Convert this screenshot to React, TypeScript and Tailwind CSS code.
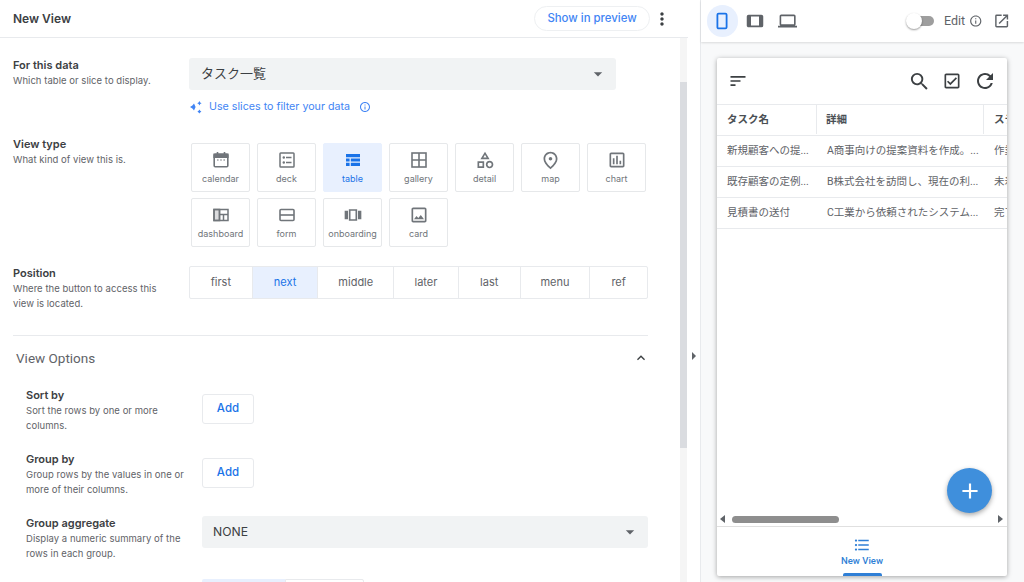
import {
  MdAdd,
  MdArrowDropDown,
  MdExpandLess,
  MdFormatListBulleted,
  MdInfoOutline,
  MdLaptop,
  MdMoreVert,
  MdOutlineCategory,
  MdOutlineCheckBox,
  MdOutlineImage,
  MdOutlineInsertChart,
  MdOutlineOpenInNew,
  MdOutlinePlace,
  MdOutlineViewCarousel,
  MdRefresh,
  MdSearch,
  MdSort,
} from "react-icons/md";

function Calendar() {
  return (
    <svg viewBox="0 0 18 18" className="h-[18px] w-[18px]" fill="none" stroke="currentColor" strokeWidth="1.6">
      <rect x="2.2" y="3.2" width="13.6" height="12.6" rx="1" />
      <path d="M2.2 3.2h13.6v3H2.2z" fill="currentColor" />
      <path d="M5.5 1v3M12.5 1v3" />
      <path d="M5 9h1.6M8.2 9h1.6M11.4 9h1.6" strokeWidth="1.2" />
    </svg>
  );
}

function Deck() {
  return (
    <svg viewBox="0 0 18 18" className="h-[18px] w-[18px]" fill="none" stroke="currentColor" strokeWidth="1.5">
      <rect x="2" y="2" width="14" height="14" rx="0.8" />
      <circle cx="5.8" cy="6.5" r="1.2" fill="currentColor" stroke="none" />
      <circle cx="5.8" cy="11.5" r="1.2" fill="currentColor" stroke="none" />
      <path d="M8 6.5h5.5M8 11.5h5.5" />
    </svg>
  );
}

function TableIcon() {
  return (
    <svg viewBox="0 0 18 18" className="h-[18px] w-[18px]" fill="currentColor">
      <path d="M2 3h14v3.2H2zM2 7.4h3.6v3.2H2zM6.8 7.4H16v3.2H6.8zM2 11.8h3.6V15H2zM6.8 11.8H16V15H6.8z" />
    </svg>
  );
}

function Gallery() {
  return (
    <svg viewBox="0 0 18 18" className="h-[18px] w-[18px]" fill="none" stroke="currentColor" strokeWidth="1.6">
      <rect x="2" y="2" width="14" height="14" />
      <path d="M9 2v14M2 9h14" />
    </svg>
  );
}

function Dashboard() {
  return (
    <svg viewBox="0 0 18 18" className="h-[18px] w-[18px]" fill="none" stroke="currentColor" strokeWidth="1.5">
      <rect x="2" y="3.5" width="14" height="11" />
      <path d="M7.5 3.5v11M7.5 8.5H16M11.5 8.5v6" />
      <path d="M2 3.5h5.5v11H2z" fill="currentColor" fillOpacity="0.25" />
    </svg>
  );
}

function FormIcon() {
  return (
    <svg viewBox="0 0 18 18" className="h-[18px] w-[18px]" fill="none" stroke="currentColor" strokeWidth="1.6">
      <rect x="2" y="3.5" width="14" height="11" rx="1" />
      <path d="M2 9h14" />
    </svg>
  );
}

function Sparkle() {
  return (
    <svg viewBox="0 0 14 14" className="h-[14px] w-[14px]" fill="#4285f4">
      <path d="M5 3.6 6.6 7 5 10.4 3.4 8.6 1 7l2.4-1.6z" />
      <path d="M10.4 1l.8 1.4 1.4.8-1.4.8-.8 1.4-.8-1.4L8.2 3.2l1.4-.8z" />
      <path d="M10.4 9.6l.8 1.2 1.2.8-1.2.8-.8 1.2-.8-1.2-1.2-.8 1.2-.8z" />
    </svg>
  );
}

function Phone() {
  return (
    <svg viewBox="0 0 18 18" className="h-[18px] w-[18px]" fill="none" stroke="#1a73e8" strokeWidth="1.8">
      <rect x="4.4" y="1.6" width="9.2" height="14.8" rx="1.2" />
    </svg>
  );
}

function Tablet() {
  return (
    <svg viewBox="0 0 18 18" className="h-[18px] w-[18px]" fill="none" stroke="#5f6368" strokeWidth="1.7">
      <rect x="1.6" y="3.6" width="14.8" height="10.8" rx="1" />
      <path d="M2 4h3v10H2zM13 4h3v10h-3z" fill="#5f6368" stroke="none" />
    </svg>
  );
}

const viewTypes = [
  { name: "calendar", icon: <Calendar /> },
  { name: "deck", icon: <Deck /> },
  { name: "table", icon: <TableIcon />, active: true },
  { name: "gallery", icon: <Gallery /> },
  { name: "detail", icon: <MdOutlineCategory size={20} /> },
  { name: "map", icon: <MdOutlinePlace size={21} /> },
  { name: "chart", icon: <MdOutlineInsertChart size={20} /> },
  { name: "dashboard", icon: <Dashboard /> },
  { name: "form", icon: <FormIcon /> },
  { name: "onboarding", icon: <MdOutlineViewCarousel size={20} /> },
  { name: "card", icon: <MdOutlineImage size={20} /> },
];

const positions = [
  { name: "first", w: "w-[63px]" },
  { name: "next", w: "w-[66px]", active: true },
  { name: "middle", w: "w-[76px]" },
  { name: "later", w: "w-[65px]" },
  { name: "last", w: "w-[62px]" },
  { name: "menu", w: "w-[70px]" },
  { name: "ref", w: "w-[57px]" },
];

const rows = [
  ["新規顧客への提...", "A商事向けの提案資料を作成。...", "作業中"],
  ["既存顧客の定例...", "B株式会社を訪問し、現在の利...", "未着手"],
  ["見積書の送付", "C工業から依頼されたシステム...", "完了"],
];

function Label({ title, desc, className }: { title: string; desc: string[]; className: string }) {
  return (
    <div className={className}>
      <div className="text-[11px] leading-[14px] font-semibold text-[#3c4043]">{title}</div>
      <div className="mt-[1px] text-[9.5px] leading-[15px] tracking-[0.04px] text-[#5f6368]">
        {desc.map((line) => (
          <div key={line}>{line}</div>
        ))}
      </div>
    </div>
  );
}

function Select({ value, className }: { value: string; className: string }) {
  return (
    <div className={`flex h-[32px] items-center justify-between rounded-[3px] bg-[#f1f3f4] pr-[8px] text-[#3c4043] ${className}`}>
      <span>{value}</span>
      <MdArrowDropDown size={20} className="text-[#5f6368]" />
    </div>
  );
}

function AddButton() {
  return (
    <div className="ml-[13px] mt-[6px] flex h-[30px] w-[52px] items-center justify-center rounded-[3px] border border-[#e8eaed] text-[11.5px] font-medium text-[#1a73e8]">
      Add
    </div>
  );
}

export default function App() {
  return (
    <div className="flex h-[582px] w-[1024px] overflow-hidden bg-white [font-family:Inter,'Noto_Sans_CJK_JP',sans-serif]">
      {/* Editor */}
      <div className="flex w-[688px] shrink-0 flex-col">
        <div className="flex h-[38px] shrink-0 items-center justify-between border-b border-[#e8eaed] pl-[13px] pr-[20px]">
          <div className="text-[12px] font-semibold text-[#3c4043]">New View</div>
          <div className="flex items-center gap-[2px]">
            <div className="flex h-[25px] w-[116px] items-center justify-center rounded-full border border-[#eef0f2] text-[11.4px] font-medium text-[#4285f4]">
              Show in preview
            </div>
            <MdMoreVert size={20} className="mr-[-4px] text-[#3c4043]" />
          </div>
        </div>

        <div className="flex min-h-0 flex-1">
          <div className="w-[680px] shrink-0 overflow-hidden pl-[13px] pr-[32px] pt-[20px]">
            {/* For this data */}
            <div className="flex">
              <Label className="w-[176px] shrink-0" title="For this data" desc={["Which table or slice to display."]} />
              <div className="flex-1">
                <Select value="タスク一覧" className="w-[427px] pl-[12px] text-[13px]" />
                <div className="mt-[9px] flex h-[16px] items-center text-[10.7px] text-[#4285f4]">
                  <Sparkle />
                  <span className="ml-[6px]">Use slices to filter your data</span>
                  <MdInfoOutline size={12} className="ml-[9px]" />
                </div>
              </div>
            </div>

            {/* View type */}
            <div className="mt-[22px] flex">
              <Label className="w-[176px] shrink-0" title="View type" desc={["What kind of view this is."]} />
              <div className="ml-[2px] mt-[6px] grid grid-cols-[repeat(7,59px)] gap-x-[7px] gap-y-[6px]">
                {viewTypes.map((v) => (
                  <div
                    key={v.name}
                    className={`flex h-[49px] flex-col items-center justify-center rounded-[2px] border ${
                      v.active ? "border-[#e8f0fe] bg-[#e8f0fe] text-[#1a73e8]" : "border-[#e6e8ea] text-[#70757a]"
                    }`}
                  >
                    <div className="flex h-[20px] items-center">{v.icon}</div>
                    <div className="mt-[3px] text-[9px] leading-[12px]">{v.name}</div>
                  </div>
                ))}
              </div>
            </div>

            {/* Position */}
            <div className="mt-[19px] flex">
              <Label className="w-[176px] shrink-0" title="Position" desc={["Where the button to access this", "view is located."]} />
              <div className="flex h-[33px] overflow-hidden rounded-[2px] border border-[#e8eaed]">
                {positions.map((p) => (
                  <div
                    key={p.name}
                    className={`flex items-center justify-center border-r border-[#e8eaed] text-[11px] last:border-r-0 ${p.w} ${
                      p.active ? "bg-[#e8f0fe] text-[#1a73e8]" : "text-[#5f6368]"
                    }`}
                  >
                    {p.name}
                  </div>
                ))}
              </div>
            </div>

            <div className="mt-[24px] border-t border-[#e8eaed]" />

            {/* View options */}
            <div className="mt-[12px] flex h-[20px] items-center justify-between pl-[3px]">
              <div className="[font-family:Roboto,sans-serif] text-[13.5px] text-[#5f6368]">View Options</div>
              <MdExpandLess size={16} className="mr-[-1px] text-[#3c4043]" />
            </div>

            <div className="pl-[13px]">
              <div className="mt-[20px] flex">
                <Label className="w-[163px] shrink-0" title="Sort by" desc={["Sort the rows by one or more", "columns."]} />
                <AddButton />
              </div>
              <div className="mt-[19px] flex">
                <Label className="w-[163px] shrink-0" title="Group by" desc={["Group rows by the values in one or", "more of their columns."]} />
                <AddButton />
              </div>
              <div className="mt-[19px] flex">
                <Label className="w-[163px] shrink-0" title="Group aggregate" desc={["Display a numeric summary of the", "rows in each group."]} />
                <Select value="NONE" className="ml-[13px] w-[446px] shrink-0 pl-[11px] text-[12.2px]" />
              </div>
              <div className="ml-[176px] mt-[18px] flex h-[30px]">
                <div className="w-[83px] rounded-l-[2px] bg-[#e8f0fe]" />
                <div className="w-[79px] rounded-r-[2px] border border-[#e8eaed]" />
              </div>
            </div>
          </div>

          {/* Scrollbar */}
          <div className="w-[7px] shrink-0 bg-[#f5f5f5] pt-[44px]">
            <div className="h-[366px] bg-[#dadce0]" />
          </div>
        </div>
      </div>

      {/* Collapse handle */}
      <div className="flex w-[13px] shrink-0 items-center justify-center border-r border-[#e8eaed] pt-[130px]">
        <svg viewBox="0 0 6 8" className="h-[8px] w-[6px]" fill="#5f6368">
          <path d="M1 0l4 4-4 4z" />
        </svg>
      </div>

      {/* Preview */}
      <div className="flex min-w-0 flex-1 flex-col bg-[#f8f9fa] [font-family:Roboto,'Noto_Sans_CJK_JP',sans-serif]">
        <div className="flex h-[42px] shrink-0 items-center bg-white pl-[6px] pr-[14px] shadow-[0_1px_2px_rgba(0,0,0,0.12)]">
          <div className="flex h-[32px] w-[32px] items-center justify-center rounded-full bg-[#e8f0fe]">
            <Phone />
          </div>
          <div className="ml-[8px] flex h-[32px] w-[18px] items-center justify-center">
            <Tablet />
          </div>
          <MdLaptop size={20} className="ml-[14px] text-[#5f6368]" />
          <div className="relative ml-[112px] h-[10px] w-[26px] rounded-full bg-[#9e9e9e]">
            <div className="absolute left-[-3px] top-[-3px] h-[16px] w-[16px] rounded-full bg-white shadow-[0_1px_2px_rgba(0,0,0,0.4)]" />
          </div>
          <span className="ml-[10px] text-[12.5px] text-[#5f6368]">Edit</span>
          <MdInfoOutline size={14} className="ml-[4px] text-[#5f6368]" />
          <MdOutlineOpenInNew size={18} className="ml-[10px] text-[#5f6368]" />
        </div>

        <div className="relative ml-[16px] mt-[16px] flex h-[518px] w-[290px] flex-col rounded-[2px] bg-white shadow-[0_1px_5px_rgba(0,0,0,0.35)]">
          <div className="flex h-[46px] shrink-0 items-center justify-between pl-[11px] pr-[10px] text-[#3c4043]">
            <MdSort size={20} />
            <div className="flex items-center gap-[11px]">
              <MdSearch size={23} />
              <MdOutlineCheckBox size={20} />
              <MdRefresh size={24} />
            </div>
          </div>

          <div className="min-h-0 flex-1 overflow-hidden text-[10.5px] text-[#5f6368]">
            <div className="flex h-[32px] border-y border-[#e8eaed] pb-[1px] font-bold text-[#4a4f54]">
              <div className="flex w-[100px] shrink-0 items-center border-r border-[#e8eaed] pl-[10px]">タスク名</div>
              <div className="flex w-[167px] shrink-0 items-center border-r border-[#e8eaed] pl-[9px]">詳細</div>
              <div className="flex w-[23px] shrink-0 items-center overflow-hidden whitespace-nowrap pl-[10px]">ステータス</div>
            </div>
            {rows.map((r) => (
              <div key={r[0]} className="flex h-[31px] items-center border-b border-[#e8eaed]">
                <div className="w-[100px] shrink-0 truncate pl-[10px]">{r[0]}</div>
                <div className="w-[167px] shrink-0 truncate pl-[10px]">{r[1]}</div>
                <div className="w-[23px] shrink-0 overflow-hidden whitespace-nowrap pl-[10px]">{r[2]}</div>
              </div>
            ))}
          </div>

          {/* Horizontal scrollbar */}
          <div className="flex h-[14px] shrink-0 items-center pl-[3px] pr-[4px] text-[#5f6368]">
            <svg viewBox="0 0 5 8" className="h-[8px] w-[5px]" fill="currentColor">
              <path d="M5 0v8L0 4z" />
            </svg>
            <div className="ml-[7px] h-[7px] w-[107px] rounded-full bg-[#8e8e8e]" />
            <svg viewBox="0 0 5 8" className="ml-auto h-[8px] w-[5px]" fill="currentColor">
              <path d="M0 0v8l5-4z" />
            </svg>
          </div>

          <div className="flex h-[50px] shrink-0 flex-col items-center border-t border-[#e0e0e0] pt-[9px] text-[#2f7fd6]">
            <MdFormatListBulleted size={18} />
            <div className="mt-[1px] text-[9.5px] font-medium leading-[12px]">New View</div>
            <div className="mt-auto h-[3px] w-[39px] rounded-t-[2px] bg-[#2f7fd6]" />
          </div>

          <div className="absolute left-[230px] top-[410px] flex h-[45px] w-[45px] items-center justify-center rounded-full bg-[#3f8fdc] text-white shadow-[0_2px_5px_rgba(0,0,0,0.35)]">
            <MdAdd size={26} />
          </div>
        </div>
      </div>
    </div>
  );
}
